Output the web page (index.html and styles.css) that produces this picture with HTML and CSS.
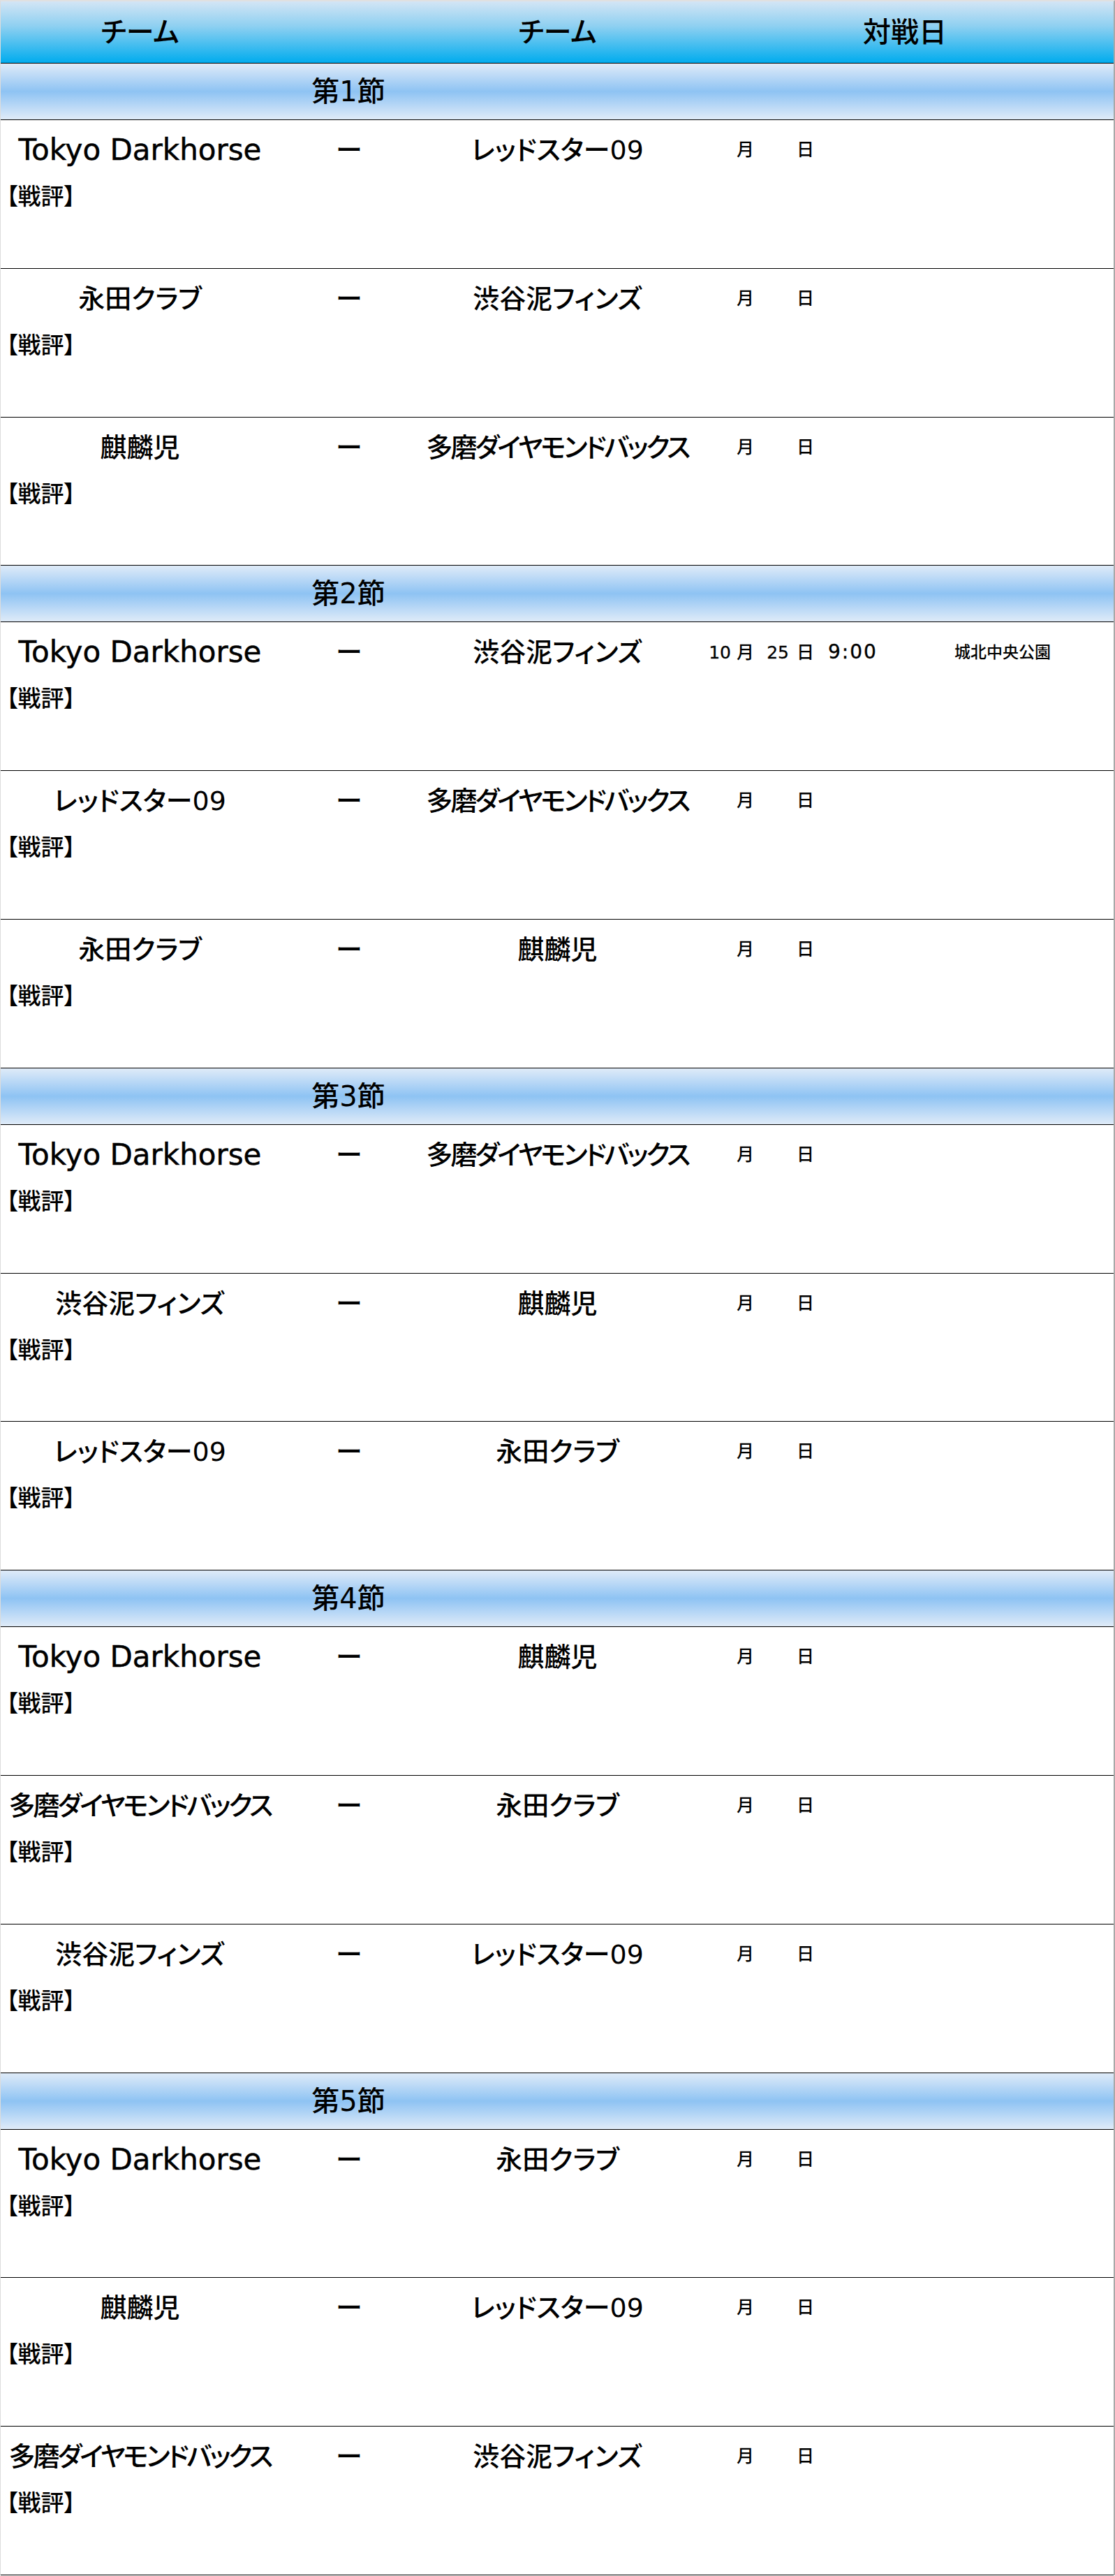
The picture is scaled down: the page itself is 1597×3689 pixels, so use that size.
FILE: index.html
```html
<!DOCTYPE html>
<html lang="ja">
<head>
<meta charset="utf-8">
<title>対戦日程</title>
<link rel="stylesheet" href="styles.css">
</head>
<body>
<div class="schedule">
  <div class="head grid">
    <div class="h-cell">チーム</div>
    <div class="h-cell"></div>
    <div class="h-cell">チーム</div>
    <div class="h-cell h-date">対戦日</div>
  </div>

  <div class="round-title grid"><span>第1節</span></div>
  <div class="match">
    <div class="line grid">
      <div class="team latin">Tokyo Darkhorse</div><div class="vs">ー</div><div class="team">レッドスター09</div>
      <div class="when"><span class="num"></span><span class="u">月</span><span class="num day"></span><span class="u u2">日</span><span class="time"></span></div>
      <div class="venue"></div>
    </div>
    <div class="review">【戦評】</div>
  </div>
  <div class="match">
    <div class="line grid">
      <div class="team">永田クラブ</div><div class="vs">ー</div><div class="team">渋谷泥フィンズ</div>
      <div class="when"><span class="num"></span><span class="u">月</span><span class="num day"></span><span class="u u2">日</span><span class="time"></span></div>
      <div class="venue"></div>
    </div>
    <div class="review">【戦評】</div>
  </div>
  <div class="match">
    <div class="line grid">
      <div class="team">麒麟児</div><div class="vs">ー</div><div class="team long">多磨ダイヤモンドバックス</div>
      <div class="when"><span class="num"></span><span class="u">月</span><span class="num day"></span><span class="u u2">日</span><span class="time"></span></div>
      <div class="venue"></div>
    </div>
    <div class="review">【戦評】</div>
  </div>

  <div class="round-title grid"><span>第2節</span></div>
  <div class="match">
    <div class="line grid">
      <div class="team latin">Tokyo Darkhorse</div><div class="vs">ー</div><div class="team">渋谷泥フィンズ</div>
      <div class="when"><span class="num">10</span><span class="u">月</span><span class="num day">25</span><span class="u u2">日</span><span class="time">9:00</span></div>
      <div class="venue">城北中央公園</div>
    </div>
    <div class="review">【戦評】</div>
  </div>
  <div class="match">
    <div class="line grid">
      <div class="team">レッドスター09</div><div class="vs">ー</div><div class="team long">多磨ダイヤモンドバックス</div>
      <div class="when"><span class="num"></span><span class="u">月</span><span class="num day"></span><span class="u u2">日</span><span class="time"></span></div>
      <div class="venue"></div>
    </div>
    <div class="review">【戦評】</div>
  </div>
  <div class="match">
    <div class="line grid">
      <div class="team">永田クラブ</div><div class="vs">ー</div><div class="team">麒麟児</div>
      <div class="when"><span class="num"></span><span class="u">月</span><span class="num day"></span><span class="u u2">日</span><span class="time"></span></div>
      <div class="venue"></div>
    </div>
    <div class="review">【戦評】</div>
  </div>

  <div class="round-title grid"><span>第3節</span></div>
  <div class="match">
    <div class="line grid">
      <div class="team latin">Tokyo Darkhorse</div><div class="vs">ー</div><div class="team long">多磨ダイヤモンドバックス</div>
      <div class="when"><span class="num"></span><span class="u">月</span><span class="num day"></span><span class="u u2">日</span><span class="time"></span></div>
      <div class="venue"></div>
    </div>
    <div class="review">【戦評】</div>
  </div>
  <div class="match">
    <div class="line grid">
      <div class="team">渋谷泥フィンズ</div><div class="vs">ー</div><div class="team">麒麟児</div>
      <div class="when"><span class="num"></span><span class="u">月</span><span class="num day"></span><span class="u u2">日</span><span class="time"></span></div>
      <div class="venue"></div>
    </div>
    <div class="review">【戦評】</div>
  </div>
  <div class="match">
    <div class="line grid">
      <div class="team">レッドスター09</div><div class="vs">ー</div><div class="team">永田クラブ</div>
      <div class="when"><span class="num"></span><span class="u">月</span><span class="num day"></span><span class="u u2">日</span><span class="time"></span></div>
      <div class="venue"></div>
    </div>
    <div class="review">【戦評】</div>
  </div>

  <div class="round-title grid"><span>第4節</span></div>
  <div class="match">
    <div class="line grid">
      <div class="team latin">Tokyo Darkhorse</div><div class="vs">ー</div><div class="team">麒麟児</div>
      <div class="when"><span class="num"></span><span class="u">月</span><span class="num day"></span><span class="u u2">日</span><span class="time"></span></div>
      <div class="venue"></div>
    </div>
    <div class="review">【戦評】</div>
  </div>
  <div class="match">
    <div class="line grid">
      <div class="team long">多磨ダイヤモンドバックス</div><div class="vs">ー</div><div class="team">永田クラブ</div>
      <div class="when"><span class="num"></span><span class="u">月</span><span class="num day"></span><span class="u u2">日</span><span class="time"></span></div>
      <div class="venue"></div>
    </div>
    <div class="review">【戦評】</div>
  </div>
  <div class="match">
    <div class="line grid">
      <div class="team">渋谷泥フィンズ</div><div class="vs">ー</div><div class="team">レッドスター09</div>
      <div class="when"><span class="num"></span><span class="u">月</span><span class="num day"></span><span class="u u2">日</span><span class="time"></span></div>
      <div class="venue"></div>
    </div>
    <div class="review">【戦評】</div>
  </div>

  <div class="round-title grid"><span>第5節</span></div>
  <div class="match">
    <div class="line grid">
      <div class="team latin">Tokyo Darkhorse</div><div class="vs">ー</div><div class="team">永田クラブ</div>
      <div class="when"><span class="num"></span><span class="u">月</span><span class="num day"></span><span class="u u2">日</span><span class="time"></span></div>
      <div class="venue"></div>
    </div>
    <div class="review">【戦評】</div>
  </div>
  <div class="match">
    <div class="line grid">
      <div class="team">麒麟児</div><div class="vs">ー</div><div class="team">レッドスター09</div>
      <div class="when"><span class="num"></span><span class="u">月</span><span class="num day"></span><span class="u u2">日</span><span class="time"></span></div>
      <div class="venue"></div>
    </div>
    <div class="review">【戦評】</div>
  </div>
  <div class="match">
    <div class="line grid">
      <div class="team long">多磨ダイヤモンドバックス</div><div class="vs">ー</div><div class="team">渋谷泥フィンズ</div>
      <div class="when"><span class="num"></span><span class="u">月</span><span class="num day"></span><span class="u u2">日</span><span class="time"></span></div>
      <div class="venue"></div>
    </div>
    <div class="review">【戦評】</div>
  </div>
</div>
</body>
</html>
```

FILE: styles.css
```css
* { box-sizing: border-box; }

body {
  margin: 0;
  background: #fff;
  color: #000;
  font-family: "DejaVu Sans", "Noto Sans CJK JP", sans-serif;
  font-weight: 500;
}

.schedule {
  width: 1597px;
  border-top: 2px solid #e0e0e0;
  border-left: 1px solid #dcdcdc;
  border-right: 2px solid #a8a8a8;
}

.grid {
  display: grid;
  grid-template-columns: 399px 200px 397px 370px 1fr;
}

.head {
  height: 89px;
  border-bottom: 1px solid #000;
  background: linear-gradient(to bottom, #d3e5f5 0%, #8fd0f1 40%, #00acee 100%);
  align-items: center;
}

.h-cell {
  font-size: 40px;
  line-height: 48px;
  text-align: center;
  font-feature-settings: "palt";
}

.h-date { grid-column: 4 / 6; }

.round-title {
  height: 81px;
  border-bottom: 1px solid #000;
  background: linear-gradient(to bottom, #dfebf8 0%, #b7d7f6 25%, #8ec3f3 50%, #b7d7f6 75%, #dfebf8 100%);
  align-items: center;
}

.round-title span {
  grid-column: 1 / 4;
  text-align: center;
  font-size: 40px;
  line-height: 48px;
  font-feature-settings: "palt";
}

.match {
  height: 212.8px;
  border-bottom: 1px solid #000;
}

.line {
  height: 86px;
  align-items: center;
}

.team, .vs {
  font-size: 38px;
  line-height: 48px;
  text-align: center;
  white-space: nowrap;
  font-feature-settings: "palt";
}

.team.latin {
  font-size: 42px;
  -webkit-text-stroke: 0.5px #000;
}

.team.long { letter-spacing: -3px; }

.when {
  display: flex;
  align-items: baseline;
  font-size: 25px;
  line-height: 30px;
  white-space: nowrap;
}

.num {
  width: 50px;
  text-align: right;
  -webkit-text-stroke: 0.3px #000;
}

.u { margin-left: 8px; }
.u2 { margin-left: 11px; }

.time {
  margin-left: 20px;
  font-size: 28px;
  letter-spacing: 2px;
  -webkit-text-stroke: 0.4px #000;
}

.venue {
  font-size: 23px;
  line-height: 30px;
  white-space: nowrap;
}

.review {
  padding-top: 4px;
  padding-left: 8px;
  font-size: 33px;
  line-height: 40px;
  font-feature-settings: "palt";
}
```
